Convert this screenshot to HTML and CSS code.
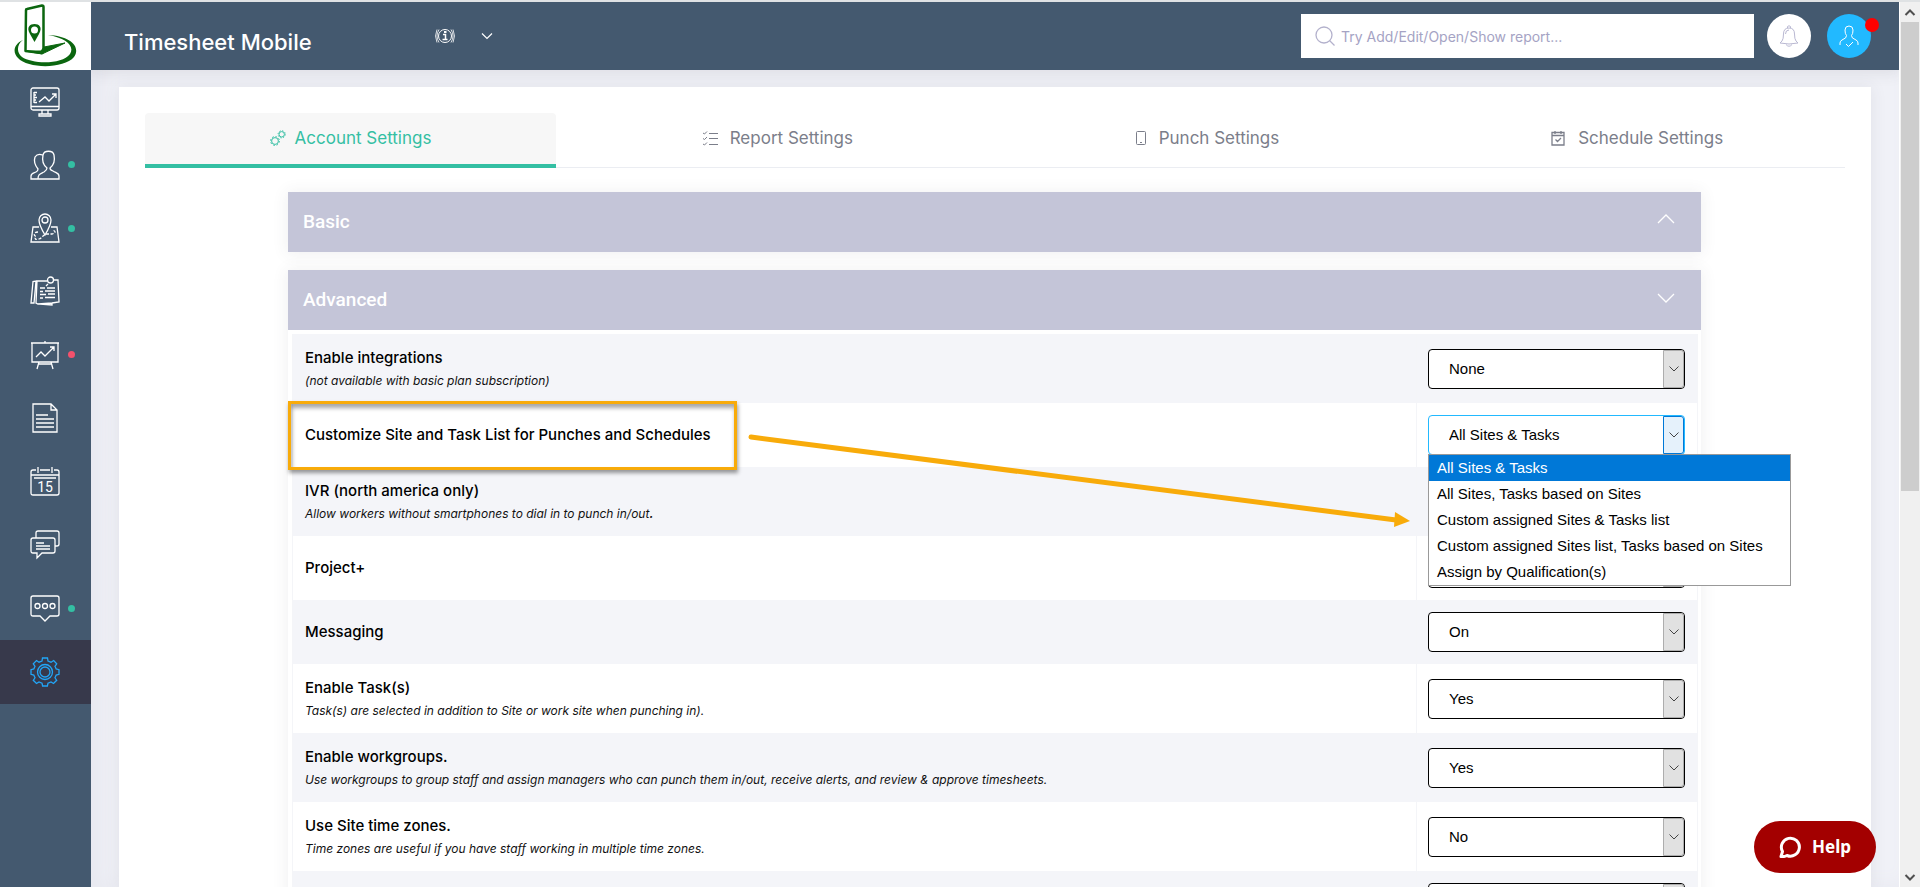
FILE: index.html
```html
<!DOCTYPE html>
<html lang="en">
<head>
<meta charset="utf-8">
<title>Timesheet Mobile</title>
<link rel="stylesheet" href="styles.css">
</head>
<body>
<div class="app">
  <aside class="sidebar">
    <a class="logo" href="#" aria-label="Timesheet Mobile home">
      <svg width="64" height="64" viewBox="0 0 64 64" fill="none" stroke="#0b660f" aria-hidden="true">
        <path d="M9 36C0 40 -2 48 4 54C14 65 50 65 60 53C67 43 57 32 34 31C52 34 61 42 56 50C48 61 18 60 8 53C2 48 3 40 9 36Z" fill="#0b660f" stroke="none"/>
        <path d="M12 6Q12 5 13 5L28 1.500Q29.500 1.500 29.500 3V46L28 49L11.500 47Z" stroke-width="2.500" stroke-linejoin="round" fill="#fff"/>
        <path d="M30 43L51 39L28 50L11 47L27 47Z" fill="#0b660f" stroke-width="1"/>
        <path d="M20.500 38L16 30C12 23 16 20 20.500 20S29 23 25 30Z" fill="#0b660f" stroke="none"/>
        <circle cx="20.500" cy="26" r="3.500" fill="#fff" stroke="none"/>
      </svg>
    </a>
    <nav class="side-nav" aria-label="Main">
      <a class="side-link" href="#" aria-label="Dashboard"><svg class="icon" viewBox="0 0 30 30"><rect x="1" y="1" width="28" height="22" rx="2"/><path d="M1 19.500h28M12 23v4M18 23v4M9 27h12v2H9zM4 5v11M4 5.500h3M4 8h2M4 10.500h3M4 13h2M4 15.500h3M9 15l6-5 4 4 7-7M22 7h4v4"/></svg></a>
      <a class="side-link" href="#" aria-label="Workers"><svg class="icon" viewBox="0 0 30 30"><path d="M8 29H29V26C29 23 26 23 23 21C20 20 20 19 20 18C24 15 25 10 24 5C23 0 14 0 13 5C12 10 13 15 17 18C17 19 17 20 14 22C10 24 8 24 8 29ZM8 29H1V26C1 23 4 23 6 22C8 21 8 20 8 19C4 14 4 10 5 7C7 4 10 4 12.500 5"/></svg><span class="dot dot-green"></span></a>
      <a class="side-link" href="#" aria-label="Sites"><svg class="icon" viewBox="0 0 30 30"><path d="M9 14H3L1 29H29L27 14H21M15 22C12 17 9 12 9 7A6 6 0 0 1 21 7C21 12 18 17 15 22Z"/><circle cx="15" cy="7" r="3"/><path stroke-dasharray="3 1.500" d="M8 19C4 19 3 22 6 23.500C4 26 6 27 9 26C12 25 13 22 16 21H22C26 20 26 18 22 17"/></svg><span class="dot dot-green"></span></a>
      <a class="side-link" href="#" aria-label="Tasks"><svg class="icon" viewBox="0 0 30 30"><path d="M6 5L4 27H1L3 5.500ZM6 5H17M23 4H28L29 26L22 27L8 28L6 27L7 5M10 28L22 29V27M18 8L16 10M10 12H15M17 12H25M10 15.500H13M15 15H25M10 18.500H16M18 18H25M10 22H13M15 21.500H25"/><circle cx="20.500" cy="4" r="3"/></svg></a>
      <a class="side-link" href="#" aria-label="Reports"><svg class="icon" viewBox="0 0 30 30"><path d="M1 3H29M15 1V3M2 3V22H28V3M9 22L7 29M21 22L23 29M9 24H21M6 17L11 12L15 16L24 7M20 7H24V11"/></svg><span class="dot dot-red"></span></a>
      <a class="side-link" href="#" aria-label="Documents"><svg class="icon" viewBox="0 0 30 30"><path d="M3 1H21L27 7V29H3ZM21 1V7H27M6 12H18M6 16H24M6 20H24M6 24H24"/></svg></a>
      <a class="side-link" href="#" aria-label="Schedule"><svg class="icon" viewBox="0 0 30 30"><path d="M10 4H20M24 4H27Q29 4 29 6V27Q29 29 27 29H3Q1 29 1 27V6Q1 4 3 4H6M1 9H29M4 12H26M8 1V7M22 1V7"/><text x="15" y="26" class="icon-text">15</text></svg></a>
      <a class="side-link" href="#" aria-label="Messages"><svg class="icon" viewBox="0 0 30 30"><path d="M6 8V3Q6 1 8 1H27Q29 1 29 3V14Q29 16 27 16H25M3 8H23Q25 8 25 10V21Q25 23 23 23H12L7 28V23H3Q1 23 1 21V10Q1 8 3 8ZM6 13H14M6 16H20M6 19H20"/></svg></a>
      <a class="side-link" href="#" aria-label="Chat"><svg class="icon" viewBox="0 0 30 30"><path d="M3 3H27Q29 3 29 5V21Q29 23 27 23H20L15 28L10 23H3Q1 23 1 21V5Q1 3 3 3Z"/><circle cx="7.500" cy="13" r="2.500"/><circle cx="15" cy="13" r="2.500"/><circle cx="22.500" cy="13" r="2.500"/></svg><span class="dot dot-green"></span></a>
      <a class="side-link active" href="#" aria-label="Settings" aria-current="page"><svg class="icon" viewBox="0 0 30 30"><path d="M12.500 1H17.500L18 4L21 5.200L23.700 3.500L26.700 6.800L25 9.300L26.200 12L29 12.700V17.300L26.200 18L25 20.800L26.700 23.300L23.500 26.500L21 25L18 26.200L17.400 29H12.600L12 26.200L9 25L6.500 26.500L3.300 23.300L5 20.800L3.800 18L1 17.300V12.700L3.800 12L5 9.300L3.300 6.800L6.500 3.500L9 5.200L12 4Z"/><circle cx="15" cy="15" r="7.500"/><circle cx="15" cy="15" r="5"/></svg></a>
    </nav>
  </aside>

  <div class="main">
    <header class="topbar">
      <h1 class="brand">Timesheet Mobile</h1>
      <button class="icon-btn info" type="button" aria-label="Information"><svg width="20" height="16" viewBox="0 0 20 16" fill="none" stroke="#fff"><circle cx="10" cy="8" r="6.500"/><path d="M4 1.500Q0 8 4 14.500M16 1.500Q20 8 16 14.500M2 1.500Q-1 8 2 14.500M18 1.500Q21 8 18 14.500" stroke-width=".8"/><path d="M8 6.500H10.500V11.500M7.500 11.500H12.500" stroke-width="1.500"/><path d="M9 3H11.500V5H9Z" fill="#fff" stroke="none"/></svg></button>
      <button class="icon-btn" type="button" aria-label="More"><svg width="12" height="8" viewBox="0 0 12 8" fill="none" stroke="#fff" stroke-width="1.200"><path d="M1 1.500L6 6.500L11 1.500"/></svg></button>
      <label class="search">
        <svg width="20" height="20" viewBox="0 0 20 20" fill="none" stroke="#b3b1cc" stroke-width="1.300" aria-hidden="true"><circle cx="9" cy="9" r="8"/><path d="M14.500 14.500L19.500 19.500"/></svg>
        <input type="text" aria-label="Search" placeholder="Try Add/Edit/Open/Show report...">
      </label>
      <button class="round bell" type="button" aria-label="Notifications"><svg width="20" height="22" viewBox="0 0 20 22" fill="none" stroke="#b9b8d2"><path d="M8.500 3V1.500Q10 0 11.500 1.500V3M3 16Q4.500 14 4.500 9Q4.500 3 10 3T15.500 9Q15.500 14 17 16L19 18Q10 20 1 18ZM7 19.500Q10 23 13 19.500M6.500 9Q6.500 5 10 5"/></svg></button>
      <button class="round user" type="button" aria-label="Profile"><svg width="20" height="22" viewBox="0 0 20 22" fill="none" stroke="#fff"><path d="M1 20V18Q1 16 3 15Q8 13 7.500 10.500Q6 9 6 5Q6 1 10 1T14 5Q14 9 12.500 10.500Q12 13 17 15Q19 16 19 18V20M7 19L9.500 21.500L14 17"/></svg><span class="alert-dot"></span></button>
    </header>

    <main class="card">
      <nav class="tabs" aria-label="Settings sections">
        <a class="tab active" href="#"><svg width="16" height="16" viewBox="0 0 16 16" fill="none" stroke="currentColor"><circle cx="5" cy="11" r="3.400"/><circle cx="5" cy="11" r="4.400" stroke-dasharray="1.700 1.750"/><circle cx="11.700" cy="4.300" r="2.700"/><circle cx="11.700" cy="4.300" r="3.600" stroke-dasharray="1.300 1.530"/></svg>Account Settings</a>
        <a class="tab" href="#"><svg width="16" height="16" viewBox="0 0 16 16" fill="none" stroke="currentColor"><path d="M7 3.500H16M7 8.500H16M7 14.500H16M1 3L2.500 4L5 1.500M1 8.500L2.500 9.500L5 7M1 14L2.500 15L5 12.500"/></svg>Report Settings</a>
        <a class="tab" href="#"><svg width="12" height="16" viewBox="0 0 12 16" fill="none" stroke="currentColor"><rect x="1.500" y="1.500" width="9" height="13" rx="1"/><path d="M5 12.500H7"/></svg>Punch Settings</a>
        <a class="tab" href="#"><svg width="16" height="16" viewBox="0 0 16 16" fill="none" stroke="currentColor"><path d="M2 2.500H14V15H2ZM2 5.500H14M5 1V4M11 1V4M5.500 9.500L7.500 11.500L11 8" stroke-width="1.300"/></svg>Schedule Settings</a>
      </nav>

      <section class="panel">
        <h2><button class="panel-head" type="button" aria-expanded="false">Basic<svg width="18" height="12" viewBox="0 0 18 12" fill="none" stroke="#fff" stroke-width="1.300"><path d="M1 10L9 2L17 10"/></svg></button></h2>
      </section>

      <section class="panel">
        <h2><button class="panel-head" type="button" aria-expanded="true">Advanced<svg width="18" height="12" viewBox="0 0 18 12" fill="none" stroke="#fff" stroke-width="1.300"><path d="M1 3L9 11L17 3"/></svg></button></h2>
        <div class="panel-body">
          <table class="settings">
            <tbody>
              <tr><td><label for="s1">Enable integrations</label><em>(not available with basic plan subscription)</em></td>
                <td><span class="select"><select id="s1"><option>None</option></select></span></td></tr>
              <tr><td class="marked"><label for="s2">Customize Site and Task List for Punches and Schedules</label>
                  <svg class="pointer" width="664" height="100" viewBox="0 0 664 100" aria-hidden="true"><path d="M5 7L650 90" stroke="#f8ab0a" stroke-width="5" stroke-linecap="round"/><path d="M649 82L664 91L648 97Z" fill="#f8ab0a"/></svg></td>
                <td><span class="select open"><select id="s2"><option>All Sites &amp; Tasks</option></select>
                  <ul class="menu" role="listbox" aria-label="Site and task list">
                    <li role="option" aria-selected="true">All Sites &amp; Tasks</li>
                    <li role="option" aria-selected="false">All Sites, Tasks based on Sites</li>
                    <li role="option" aria-selected="false">Custom assigned Sites &amp; Tasks list</li>
                    <li role="option" aria-selected="false">Custom assigned Sites list, Tasks based on Sites</li>
                    <li role="option" aria-selected="false">Assign by Qualification(s)</li>
                  </ul></span></td></tr>
              <tr><td><label for="s3">IVR (north america only)</label><em>Allow workers without smartphones to dial in to punch in/out<b>.</b></em></td>
                <td><span class="select"><select id="s3"><option>On</option></select></span></td></tr>
              <tr><td><label for="s4">Project+</label></td>
                <td><span class="select"><select id="s4"><option>On</option></select></span></td></tr>
              <tr><td><label for="s5">Messaging</label></td>
                <td><span class="select"><select id="s5"><option>On</option></select></span></td></tr>
              <tr><td><label for="s6">Enable Task(s)</label><em>Task(s) are selected in addition to Site or work site when punching in).</em></td>
                <td><span class="select"><select id="s6"><option>Yes</option></select></span></td></tr>
              <tr><td><label for="s7">Enable workgroups.</label><em>Use workgroups to group staff and assign managers who can punch them in/out, receive alerts, and review &amp; approve timesheets.</em></td>
                <td><span class="select"><select id="s7"><option>Yes</option></select></span></td></tr>
              <tr><td><label for="s8">Use Site time zones.</label><em>Time zones are useful if you have staff working in multiple time zones.</em></td>
                <td><span class="select"><select id="s8"><option>No</option></select></span></td></tr>
              <tr><td></td>
                <td><span class="select"><select aria-label="More"><option></option></select></span></td></tr>
            </tbody>
          </table>
        </div>
      </section>
    </main>
  </div>

  <div class="scrollbar" aria-hidden="true">
    <svg width="18" height="20" viewBox="0 0 18 20" fill="none" stroke="#505050" stroke-width="2"><path d="M4.500 13L9 8.500L13.500 13"/></svg>
    <div class="thumb"></div>
    <svg class="down" width="18" height="20" viewBox="0 0 18 20" fill="none" stroke="#505050" stroke-width="2"><path d="M4.500 8L9 12.500L13.500 8"/></svg>
  </div>
</div>

<button class="help" type="button"><svg width="22" height="22" viewBox="0 0 22 22" fill="none" stroke="#fff" stroke-width="3" aria-hidden="true"><path d="M2 20.500L3.500 15.500A9 9 0 1 1 8 19.500Q5 21 2 20.500Z" stroke-linejoin="round"/></svg>Help</button>
</body>
</html>
```
FILE: styles.css
```css
*, *::before, *::after { box-sizing: border-box; }

body {
  margin: 0;
  height: 100vh;
  overflow: hidden;
  background: #f0f1f7;
  font-family: Inter, "Open Sans", sans-serif;
  color: #111;
}

button, input, select { font: inherit; color: inherit; }
button { border: 0; padding: 0; background: none; cursor: pointer; }
a { text-decoration: none; }
svg { flex: none; }

.app {
  display: grid;
  grid-template-columns: 91px minmax(0, 1fr) 21px;
  height: 100vh;
  border-top: 2px solid #dfe2e4;
}

/* Sidebar */
.sidebar { background: #44596f; min-height: 0; overflow: hidden; }
.logo { display: flex; justify-content: center; align-items: center; height: 68px; background: #fff; }
.side-nav { display: flex; flex-direction: column; justify-content: space-between; height: 634px; }
.side-link {
  display: flex;
  align-items: center;
  gap: 8px;
  height: 63px;
  padding-left: 30px;
  color: #fff;
}
.side-link.active { height: 64px; background: #37394b; color: #22a6f8; }
.icon { width: 30px; height: 30px; fill: none; stroke: currentColor; stroke-width: 1.3; }
.icon-text { font: 14px Roboto, sans-serif; text-anchor: middle; fill: currentColor; stroke: none; }
.dot { width: 7px; height: 7px; border-radius: 50%; }
.dot-green { background: #34bfa3; }
.dot-red { background: #f4516c; }

/* Header */
.main { display: flex; flex-direction: column; min-width: 0; min-height: 0; overflow: hidden; box-shadow: inset 12px 0 20px #e8e9f0; }
.topbar {
  display: flex;
  align-items: center;
  height: 68px;
  flex: none;
  padding: 0 28px 0 33px;
  background: #44596f;
  box-shadow: 0 1px 15px 1px rgba(69, 65, 78, .12);
}
.brand { margin: 12px 0 0; font-size: 22px; line-height: 28px; font-weight: 500; color: #fff; }
.icon-btn { display: flex; margin-right: 26px; }
.info { margin-left: 123px; }
.search {
  display: flex;
  align-items: center;
  gap: 6px;
  width: 453px;
  height: 44px;
  margin-left: auto;
  padding: 0 14px;
  background: #fff;
}
.search input { flex: 1; border: 0; padding: 0; outline: 0; font-size: 14px; }
.search input::placeholder { color: #a5a3c4; opacity: 1; }
.round {
  position: relative;
  display: flex;
  align-items: center;
  justify-content: center;
  width: 44px;
  height: 44px;
  margin-left: 13px;
  border-radius: 50%;
}
.bell { background: #fff; }
.user { margin-left: 16px; background: #22b9ff; }
.alert-dot { position: absolute; top: 4px; right: -8px; width: 14px; height: 14px; border-radius: 50%; background: #f00; }

/* Card and tabs */
.card {
  flex: 1;
  min-height: 0;
  margin: 17px 28px 0;
  padding: 26px 26px 0;
  background: #fff;
  box-shadow: 0 1px 15px 1px rgba(69, 65, 78, .08);
}
.tabs { display: grid; grid-template-columns: 411px repeat(3, 1fr); column-gap: 13px; border-bottom: 1px solid #ebedf2; }
.tab {
  display: flex;
  align-items: center;
  justify-content: center;
  gap: 12px;
  height: 54px;
  padding-bottom: 4px;
  font-size: 17px;
  color: #7b7e8a;
}
.tab.active {
  gap: 9px;
  height: 55px;
  margin-bottom: -1px;
  border-bottom: 4px solid #34bfa3;
  border-radius: 4px 4px 0 0;
  padding-bottom: 2px;
  background: #f7f7f7;
  color: #34bfa3;
}

/* Panels */
.panel { margin: 18px 144px 0 143px; box-shadow: 0 1px 15px 1px rgba(69, 65, 78, .08); }
.tabs + .panel { margin-top: 24px; }
.panel h2 { margin: 0; }
.panel-head {
  display: flex;
  align-items: center;
  justify-content: space-between;
  width: 100%;
  height: 60px;
  padding: 0 26px 0 15px;
  background: #c4c5d8;
  font: 500 19px/24px Roboto, sans-serif;
  color: #fff;
}
.panel-head svg { margin-bottom: 6px; }
.panel-body { padding: 4px 3px 0 4px; background: #fff; }

.settings { width: 100%; border-collapse: separate; border-spacing: 0; }
.settings td { height: 64px; padding: 0 12px; border-right: 1px solid #f4f5f8; }
.settings td:first-child { position: relative; border-left: 1px solid #f4f5f8; }
.settings td:last-child { width: 281px; padding-left: 11px; }
.settings tr:nth-child(odd) { background: #f4f5f9; }
.settings label { display: block; font-size: 15px; line-height: 24px; font-weight: 500; color: #000; }
.settings em { display: block; font-size: 12px; line-height: 22px; color: #111; }
.settings td:has(em) { padding-top: 12px; padding-bottom: 11px; }

.select { display: block; position: relative; width: 257px; height: 40px; }
.select select {
  appearance: none;
  display: block;
  width: 100%;
  height: 40px;
  padding: 0 30px 1px 20px;
  border: 1px solid #000;
  border-radius: 4px;
  outline: 0;
  background: #fff;
  font: 15px "Liberation Sans", Arial, sans-serif;
  color: #000;
}
.select::after {
  content: "";
  position: absolute;
  top: 1px;
  right: 1px;
  width: 21px;
  height: 38px;
  border: 1px solid #adadad;
  border-radius: 0 3px 3px 0;
  background: #e1e1e1 url("data:image/svg+xml,%3Csvg xmlns='http://www.w3.org/2000/svg' width='10' height='6' fill='none' stroke='%23444'%3E%3Cpath d='M.5 .5L5 5L9.500 .5'/%3E%3C/svg%3E") no-repeat center;
  pointer-events: none;
}
.select.open select { border-color: #22b9ff; }
.select.open::after { border-color: #0078d7; background-color: #e5f1fb; }

.menu {
  position: absolute;
  z-index: 3;
  top: 39px;
  left: 0;
  margin: 0;
  padding: 0;
  width: 363px;
  border: 1px solid #999;
  background: #fff;
  list-style: none;
  font: 15px/26px "Liberation Sans", Arial, sans-serif;
  color: #000;
}
.menu li { padding: 0 8px; white-space: nowrap; }
.menu li[aria-selected="true"] { background: #0078d7; color: #fff; }

/* Highlighted setting */
.marked label { width: max-content; }
.marked::before {
  content: "";
  position: absolute;
  z-index: 1;
  inset: -2px auto -3px -5px;
  width: 449px;
  border: 3px solid #f8ab0a;
  box-shadow: 1px 3px 4px rgba(0, 0, 0, .4), inset 1px 4px 4px rgba(0, 0, 0, .35);
}
.pointer { position: absolute; z-index: 2; top: 27px; right: 6px; }

/* Window scrollbar */
.scrollbar { display: flex; flex-direction: column; align-items: center; background: #f0f0f0; border-left: 1px solid #fff; }
.thumb { width: 18px; flex: 0 0 53%; background: #cdcdcd; }
.down { margin-top: auto; }

.help {
  position: fixed;
  z-index: 4;
  right: 44px;
  bottom: 14px;
  display: flex;
  align-items: center;
  gap: 11px;
  height: 52px;
  padding: 0 25px;
  border-radius: 26px;
  background: #a30000;
  font: 700 17px/24px "Noto Sans", sans-serif;
  color: #fff;
}
```
